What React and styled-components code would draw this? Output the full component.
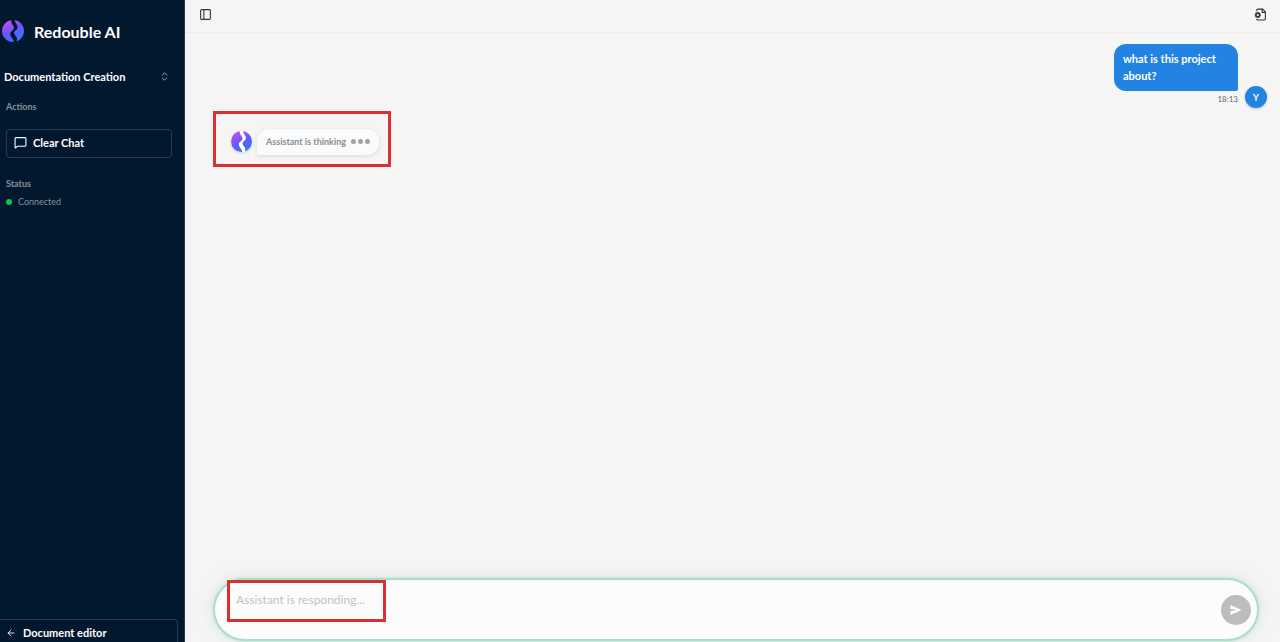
import React from 'react';
import styled, { createGlobalStyle } from 'styled-components';
import {
	ArrowLeft,
	ChevronsUpDown,
	MessageSquare,
	PanelLeft,
} from 'lucide-react';

const navy = '#02182f';
const blue = '#2383e2';
const red = '#dc2f2f';
const muted = '#8a9097';

const GlobalStyle = createGlobalStyle`
	* {
		box-sizing: border-box;
	}

	body {
		margin: 0;
		background: #f5f5f5;
		font-family: Lato, 'Open Sans', sans-serif;
	}

	button,
	input {
		font-family: inherit;
	}
`;

const Layout = styled.div`
	display: flex;
	height: 100vh;
	overflow: hidden;
`;

const Sidebar = styled.aside`
	display: flex;
	flex-direction: column;
	flex: none;
	width: 185px;
	padding-top: 20px;
	background: ${navy};
	border-right: 1px solid #24384d;
	color: #fff;
`;

const Brand = styled.div`
	display: flex;
	align-items: center;
	gap: 10px;
	height: 22px;
	padding-left: 2px;
	font-size: 16px;
	font-weight: 700;
`;

const ProjectButton = styled.button`
	display: flex;
	align-items: center;
	justify-content: space-between;
	height: 24px;
	margin-top: 23px;
	padding: 0 14px 2px 4px;
	border: 0;
	background: none;
	color: #fff;
	font-size: 11px;
	font-weight: 700;
	cursor: pointer;

	svg {
		color: #a8b1ba;
	}
`;

const Section = styled.section`
	display: flex;
	flex-direction: column;
	padding: 0 12px 0 6px;
	margin-top: ${({ $top }) => $top}px;
`;

const SectionTitle = styled.h2`
	margin: 0;
	color: ${muted};
	font-size: 9px;
	font-weight: 700;
	line-height: 12px;
`;

const ActionButton = styled.button`
	display: flex;
	align-items: center;
	gap: 6px;
	height: 29px;
	margin-top: 16px;
	padding: 0 7px 2px;
	border: 1px solid #2a3e53;
	border-radius: 4px;
	background: none;
	color: #fff;
	font-size: 11px;
	font-weight: 700;
	cursor: pointer;
`;

const Status = styled.div`
	display: flex;
	align-items: center;
	gap: 6px;
	margin-top: 6px;
	color: ${muted};
	font-size: 9px;
	line-height: 12px;

	&::before {
		content: '';
		width: 6px;
		height: 6px;
		border-radius: 50%;
		background: #00c853;
	}
`;

const EditorLink = styled.a`
	display: flex;
	align-items: center;
	gap: 7px;
	height: 23px;
	margin: auto 6px 0 0;
	padding: 3px 6px 0;
	border: 1px solid #2a3e53;
	border-width: 1px 1px 0 0;
	border-top-right-radius: 4px;
	color: #fff;
	font-size: 11px;
	font-weight: 700;
	text-decoration: none;
`;

const Main = styled.main`
	display: flex;
	flex: 1;
	flex-direction: column;
	min-width: 0;
`;

const Header = styled.header`
	display: flex;
	align-items: center;
	justify-content: space-between;
	height: 33px;
	padding: 0 13px 4px 14px;
	border-bottom: 1px solid #ededed;
`;

const IconButton = styled.button`
	display: flex;
	padding: 0;
	border: 0;
	background: none;
	color: #333;
	cursor: pointer;
`;

const Messages = styled.div`
	display: flex;
	flex: 1;
	flex-direction: column;
	gap: 6px;
	padding: 11px 13px 0 28px;
`;

const UserRow = styled.div`
	display: flex;
	align-items: flex-end;
	justify-content: flex-end;
	gap: 7px;
`;

const UserMessage = styled.div`
	display: flex;
	flex-direction: column;
	align-items: flex-end;
	gap: 2px;
	width: 124px;
`;

const UserBubble = styled.p`
	width: 100%;
	margin: 0;
	padding: 6px 20px 7px 9px;
	border-radius: 12px 12px 2px 12px;
	background: ${blue};
	color: #fff;
	font-size: 11px;
	font-weight: 700;
	line-height: 17px;
`;

const Time = styled.time`
	color: #666;
	font-size: 8px;
	line-height: 12px;
`;

const Avatar = styled.div`
	display: flex;
	align-items: center;
	justify-content: center;
	width: 22px;
	height: 22px;
	margin-bottom: -3px;
	border-radius: 50%;
	background: ${blue};
	box-shadow: 0 1px 3px rgba(0, 0, 0, 0.2);
	color: #fff;
	font-size: 9px;
	font-weight: 700;
`;

const ThinkingRow = styled.div`
	display: flex;
	align-self: flex-start;
	align-items: center;
	gap: 5px;
	height: 56px;
	padding: 5px 9px 0 15px;
	border: 3px solid ${red};
`;

const LogoBadge = styled.div`
	display: flex;
	border-radius: 50%;
	background: #fff;
	box-shadow: 0 1px 3px rgba(0, 0, 0, 0.15);
`;

const ThinkingBubble = styled.div`
	display: flex;
	align-items: center;
	justify-content: space-between;
	width: 122px;
	height: 26px;
	padding: 0 9px 1px;
	border-radius: 12px 12px 12px 2px;
	background: #fafbfc;
	box-shadow: 0 1px 4px rgba(0, 0, 0, 0.12);
	color: #8e8e8e;
	font-size: 9px;
	font-weight: 700;
`;

const Dots = styled.span`
	display: flex;
	gap: 2px;
	padding-top: 1px;

	i {
		width: 5px;
		height: 5px;
		border-radius: 50%;
		background: #a3a3a3;
	}
`;

const Composer = styled.form`
	display: flex;
	align-items: center;
	justify-content: space-between;
	height: 63px;
	margin: 0 21px 1px 28px;
	padding: 0 6px 0 12px;
	border: 2px solid #a9dfc9;
	border-radius: 32px;
	background: #fcfcfc;
	box-shadow: 0 0 4px rgba(90, 200, 160, 0.3), 0 0 20px rgba(70, 150, 120, 0.12);
`;

const Field = styled.div`
	flex: 1;
	align-self: flex-start;
`;

const Input = styled.input`
	display: block;
	width: 159px;
	height: 42px;
	padding: 0 6px 3px;
	border: 3px solid ${red};
	outline: 0;
	background: none;
	font-size: 12px;

	&::placeholder {
		color: #c2c2c2;
		opacity: 1;
	}
`;

const SendButton = styled.button`
	display: flex;
	align-items: center;
	justify-content: center;
	width: 30px;
	height: 30px;
	padding: 0;
	border: 0;
	border-radius: 50%;
	background: #bdbdbd;
`;

const Logo = ({ size, gap }) => (
	<svg width={size} height={size} viewBox="0 0 22 22" aria-hidden="true">
		<defs>
			<linearGradient id={`fill${size}`} x1="0.2" y1="0" x2="0.7" y2="1">
				<stop offset="0" stopColor="#c653ee" />
				<stop offset="0.5" stopColor="#6a56f7" />
				<stop offset="1" stopColor="#2b78ff" />
			</linearGradient>
		</defs>
		<circle cx="11" cy="11" r="11" fill={`url(#fill${size})`} />
		<path
			d="M9 -1 H12.5 C12 2 15.8 4.5 15.6 7.5 C15.4 10 12 10.8 12 13 C12 15 14.8 16 15 18.5 L14.5 23 H12 C12 19 8.3 17.5 8.2 14 C8.1 11.2 12 10.5 12 8 C12 5.5 8.8 4 9 -1Z"
			fill={gap}
		/>
	</svg>
);

const FileSettings = () => (
	<svg
		width="13"
		height="13"
		viewBox="0 0 24 24"
		fill="none"
		stroke="currentColor"
		strokeWidth="2"
		strokeLinecap="round"
		strokeLinejoin="round"
		aria-hidden="true"
	>
		<path d="M5 5V4a2 2 0 0 1 2-2h9l5 5v13a2 2 0 0 1-2 2H7a2 2 0 0 1-2-1" />
		<path d="M15 2v6h6" />
		<circle cx="7" cy="13" r="3.5" strokeWidth="3" />
		<path d="M7 8v1M7 17v1M2 13h1M11 13h1M3.5 9.5l.7.7M9.8 15.8l.7.7M3.5 16.5l.7-.7M9.8 10.2l.7-.7" />
	</svg>
);

const App = () => (
	<>
		<GlobalStyle />
		<Layout>
			<Sidebar>
				<Brand>
					<Logo size={22} gap={navy} />
					Redouble AI
				</Brand>
				<ProjectButton type="button">
					Documentation Creation
					<ChevronsUpDown size={11} />
				</ProjectButton>
				<Section $top={12}>
					<SectionTitle>Actions</SectionTitle>
					<ActionButton type="button">
						<MessageSquare size={13} />
						Clear Chat
					</ActionButton>
				</Section>
				<Section $top={20}>
					<SectionTitle>Status</SectionTitle>
					<Status>Connected</Status>
				</Section>
				<EditorLink href="#editor">
					<ArrowLeft size={10} />
					Document editor
				</EditorLink>
			</Sidebar>
			<Main>
				<Header>
					<IconButton type="button" aria-label="Toggle sidebar">
						<PanelLeft size={13} />
					</IconButton>
					<IconButton type="button" aria-label="Document settings">
						<FileSettings />
					</IconButton>
				</Header>
				<Messages>
					<UserRow>
						<UserMessage>
							<UserBubble>what is this project about?</UserBubble>
							<Time>18:13</Time>
						</UserMessage>
						<Avatar>Y</Avatar>
					</UserRow>
					<ThinkingRow>
						<LogoBadge>
							<Logo size={21} gap="#fff" />
						</LogoBadge>
						<ThinkingBubble>
							Assistant is thinking
							<Dots>
								<i />
								<i />
								<i />
							</Dots>
						</ThinkingBubble>
					</ThinkingRow>
				</Messages>
				<Composer>
					<Field>
						<Input
							aria-label="Message"
							placeholder="Assistant is responding..."
						/>
					</Field>
					<SendButton type="button" aria-label="Send message">
						<svg width="12" height="10" viewBox="0 0 12 10">
							<path d="M0.5 0 11.5 5 0.5 10V6.2L7 5 0.5 3.8Z" fill="#fff" />
						</svg>
					</SendButton>
				</Composer>
			</Main>
		</Layout>
	</>
);

export default App;
